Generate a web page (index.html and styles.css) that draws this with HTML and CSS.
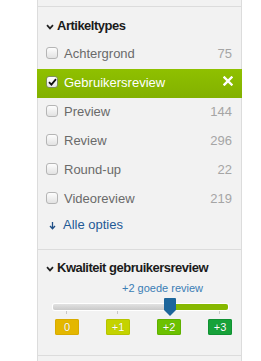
FILE: index.html
```html
<!DOCTYPE html>
<html lang="nl">
<head>
<meta charset="utf-8">
<title>Filters</title>
<link rel="stylesheet" href="styles.css">
</head>
<body>
<aside class="panel">
  <div class="top-stub"></div>

  <section class="facet facet-types">
    <h3 class="facet-title">
      <svg class="chev" width="8" height="6" viewBox="0 0 8 6"><path d="M1 1.2 L4 4.4 L7 1.2" fill="none" stroke="#222" stroke-width="1.7"/></svg>
      <span>Artikeltypes</span>
    </h3>
    <ul class="options">
      <li class="option"><span class="cb"></span><span class="label">Achtergrond</span><span class="count">75</span></li>
      <li class="option active"><span class="cb checked"><svg width="9" height="8" viewBox="0 0 9 8"><path d="M1 4.2 L3.4 6.6 L8 1.2" fill="none" stroke="#111" stroke-width="1.8"/></svg></span><span class="label">Gebruikersreview</span><span class="remove"><svg width="10" height="10" viewBox="0 0 10 10"><path d="M1.5 1.5 L8.5 8.5 M8.5 1.5 L1.5 8.5" stroke="#fff" stroke-width="2.4" stroke-linecap="square"/></svg></span></li>
      <li class="option"><span class="cb"></span><span class="label">Preview</span><span class="count">144</span></li>
      <li class="option"><span class="cb"></span><span class="label">Review</span><span class="count">296</span></li>
      <li class="option"><span class="cb"></span><span class="label">Round-up</span><span class="count">22</span></li>
      <li class="option"><span class="cb"></span><span class="label">Videoreview</span><span class="count">219</span></li>
    </ul>
    <a class="more" href="#"><svg class="arrow" width="7" height="9" viewBox="0 0 7 9"><path d="M3.5 1 V7.5 M1 5 L3.5 7.8 L6 5" fill="none" stroke="#1f4f86" stroke-width="1.3"/></svg>Alle opties</a>
  </section>

  <section class="facet facet-quality">
    <h3 class="facet-title">
      <svg class="chev" width="8" height="6" viewBox="0 0 8 6"><path d="M1 1.2 L4 4.4 L7 1.2" fill="none" stroke="#222" stroke-width="1.7"/></svg>
      <span>Kwaliteit gebruikersreview</span>
    </h3>
    <div class="slider-label">+2 goede review</div>
    <div class="slider">
      <div class="track">
        <div class="track-off"></div>
        <div class="track-on"></div>
      </div>
      <svg class="handle" width="12" height="18" viewBox="0 0 12 18"><path d="M1 0 H11 Q12 0 12 1 V12 L6 18 L0 12 V1 Q0 0 1 0 Z" fill="#1d669b"/></svg>
    </div>
    <div class="ticks"><span></span><span></span><span></span><span></span></div>
    <div class="badges">
      <span class="badge b0">0</span>
      <span class="badge b1">+1</span>
      <span class="badge b2">+2</span>
      <span class="badge b3">+3</span>
    </div>
  </section>
  <div class="bottom-stub"></div>
</aside>
</body>
</html>
```
FILE: styles.css
```css
* { box-sizing: border-box; }
html, body { margin: 0; padding: 0; background: #fff; }
body { font-family: "Liberation Sans", Arial, sans-serif; font-size: 13px; color: #666; }

.panel {
  margin-left: 37px;
  width: 205px;
  background: #f2f2f2;
  border-left: 1px solid #dcdcdc;
  border-right: 1px solid #dcdcdc;
  min-height: 361px;
}
.top-stub { height: 7px; border-bottom: 1px solid #dcdcdc; }

.facet { border-bottom: 1px solid #dcdcdc; }
.facet-types { padding: 10px 0 15px; }
.facet-quality { padding: 9px 0 20px; }

.facet-title {
  margin: 0;
  padding-left: 8px;
  display: flex;
  align-items: center;
  gap: 3px;
  font-size: 13px;
  font-weight: bold;
  letter-spacing: -0.5px;
  line-height: 18px;
  color: #1b1b1b;
}
.chev { flex: none; margin-top: 1px; }

.options { list-style: none; margin: 5px 0 0; padding: 0; }
.option {
  display: flex;
  align-items: center;
  height: 29px;
  padding: 0 9px 2px 8px;
}
.cb {
  flex: none;
  width: 12px;
  height: 12px;
  border: 1px solid #b5b5b5;
  border-radius: 3px;
  background: linear-gradient(#fdfdfd, #e2e2e2);
  margin-right: 6px;
  margin-top: -2px;
  display: flex;
  align-items: center;
  justify-content: center;
}
.cb.checked { background: linear-gradient(#ffffff, #e8e8e8); border-color: #7f8f60; }
.label { flex: 1; color: #6a6a6a; }
.count { color: #a5a5a5; }
.option.active {
  background: linear-gradient(#8fc000, #82b100);
  margin: 0 -1px;
  padding: 0 10px 2px 9px;
}
.option.active .label { color: #fff; }
.remove { display: flex; margin-top: -3px; margin-right: -1px; }

.more {
  display: flex;
  align-items: center;
  height: 20px;
  padding-left: 11px;
  color: #1f5a96;
  text-decoration: none;
}
.arrow { margin-right: 7px; margin-top: 2px; }

.slider-label {
  margin-top: 4px;
  padding-left: 84px;
  font-size: 11px;
  line-height: 14px;
  color: #3a7db5;
}
.slider {
  position: relative;
  margin: 9px 0 0 15px;
  width: 175px;
  height: 6px;
}
.track {
  display: flex;
  height: 6px;
  border-radius: 2px;
  overflow: hidden;
  box-shadow: 0 0 0 1px #fff;
}
.track-off { width: 123px; background: linear-gradient(#e2e2e2, #c9c9c9); }
.track-on { flex: 1; background: #86b800; }
.handle { position: absolute; left: 111px; top: -6px; }

.ticks {
  display: flex;
  justify-content: space-between;
  margin: 1px 0 0 28px;
  width: 154px;
  height: 3px;
}
.ticks span { width: 1px; height: 3px; background: #c8c8c8; }

.badges {
  display: flex;
  justify-content: space-between;
  margin: 5px 0 0 17px;
  width: 177px;
}
.badge {
  width: 24px;
  height: 16px;
  line-height: 16px;
  text-align: center;
  font-size: 11px;
  color: #fff;
  border-radius: 2px;
  text-shadow: 0 0 1px rgba(0,0,0,0.25);
}
.b0 { background: #e4b700; box-shadow: inset 0 0 0 1px #d8ab00; }
.b1 { background: #c4d300; box-shadow: inset 0 0 0 1px #b6c400; }
.b2 { background: #6cc100; box-shadow: inset 0 0 0 1px #5fb000; }
.b3 { background: #17a23a; box-shadow: inset 0 0 0 1px #119133; }

.bottom-stub { height: 5px; }
```
